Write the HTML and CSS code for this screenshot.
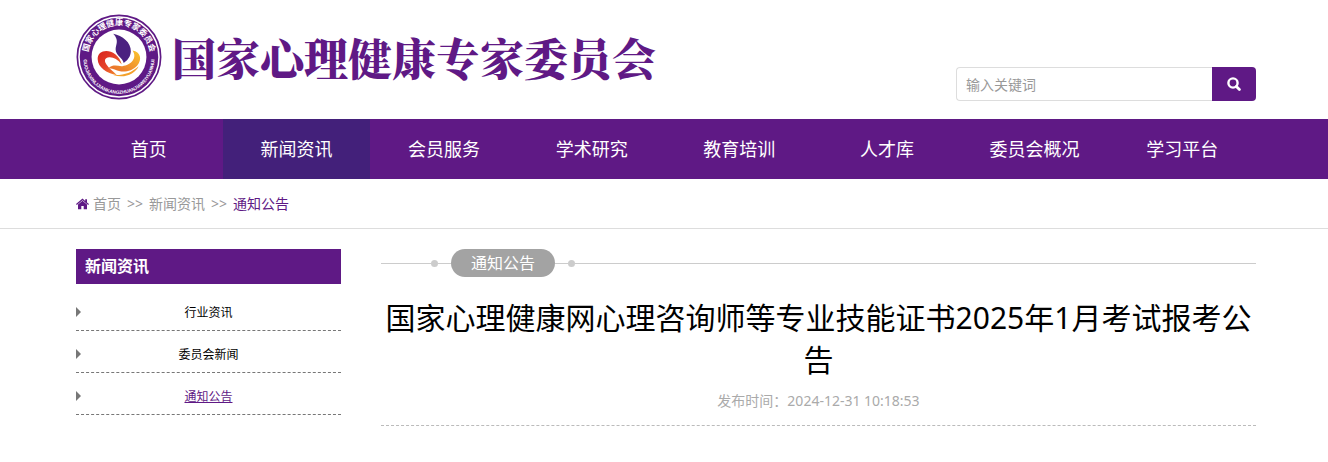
FILE: index.html
```
<!DOCTYPE html>
<html lang="zh-CN">
<head>
  <meta charset="UTF-8">
  <meta name="viewport" content="width=device-width, initial-scale=1.0">
  <title>国家心理健康专家委员会</title>
  <link rel="stylesheet" href="styles.css">
</head>
<body>
  <header class="header container">
    <a class="logo" href="#">
      <svg class="logo-mark" viewBox="20 20 254 254" aria-hidden="true">
        <defs>
          <linearGradient id="heart" x1="0" y1="0" x2="1" y2="1">
            <stop offset="0" stop-color="#d8241f"/>
            <stop offset="0.5" stop-color="#e5432a"/>
            <stop offset="1" stop-color="#f6a42c"/>
          </linearGradient>
          <linearGradient id="wing" x1="1" y1="0" x2="0" y2="1">
            <stop offset="0" stop-color="#fbc62d"/>
            <stop offset="1" stop-color="#e8662a"/>
          </linearGradient>
          <path id="arc-top" d="M57 165 A92 92 0 1 1 237 165"/>
          <path id="arc-bottom" d="M42 151 A105 105 0 0 0 252 151"/>
        </defs>
        <circle cx="147" cy="147" r="123" fill="#fff" stroke="#5f1985" stroke-width="5"/>
        <circle cx="147" cy="147" r="116" fill="#5f1985"/>
        <circle cx="147" cy="147" r="81" fill="#fff"/>
        <text class="ring-cn"><textPath href="#arc-top" startOffset="50%">国家心理健康专家委员会</textPath></text>
        <text class="ring-en"><textPath href="#arc-bottom" startOffset="50%">GUOJIAXINLIJIANKANGZHUANJIAWEIYUANHUI</textPath></text>
        <path fill="#4b2180" d="M130 78 C157 83 183 104 182 130 C181 147 173 155 161 165 C158 148 137 143 137 124 C138 108 148 97 130 78 Z"/>
        <path fill="url(#heart)" d="M141 201 C110 195 85 178 84 154 C83 128 114 122 136 139 C146 147 152 157 155 169 C143 154 130 147 118 148 C105 149 102 158 110 169 C117 180 129 188 141 201 Z"/>
        <path fill="url(#wing)" d="M187 128 C211 132 216 155 201 172 C187 188 166 192 150 189 C137 187 130 179 116 180 C131 167 144 175 157 174 C183 171 202 150 187 128 Z"/>
        <path fill="#f3a12b" d="M205 174 C194 197 164 211 130 200 C160 202 184 193 205 174 Z"/>
      </svg>
      <span class="logo-text">国家心理健康专家委员会</span>
    </a>
    <form class="search" action="#">
      <input class="search-input" type="text" placeholder="输入关键词" aria-label="输入关键词">
      <button class="search-button" type="submit" aria-label="搜索">
        <svg viewBox="0 0 14 14" width="14" height="14" fill="none" stroke="#fff">
          <circle cx="6" cy="6" r="4.6" stroke-width="2.4"/>
          <path d="M9.4 9.4 L12.4 12.4" stroke-width="2.8" stroke-linecap="round"/>
        </svg>
      </button>
    </form>
  </header>

  <nav class="nav">
    <ul class="nav-list container">
      <li><a href="#">首页</a></li>
      <li><a class="active" href="#">新闻资讯</a></li>
      <li><a href="#">会员服务</a></li>
      <li><a href="#">学术研究</a></li>
      <li><a href="#">教育培训</a></li>
      <li><a href="#">人才库</a></li>
      <li><a href="#">委员会概况</a></li>
      <li><a href="#">学习平台</a></li>
    </ul>
  </nav>

  <div class="crumbs">
    <div class="crumbs-inner container">
      <svg class="home" viewBox="0 0 13 12" width="13" height="12" fill="#5f1985" aria-hidden="true">
        <path d="M6.5 0.6 L9.2 2.9 V1.2 H11 V4.4 L13 6.1 L12.2 7 L6.5 2.2 L0.8 7 L0 6.1 Z"/>
        <path d="M6.5 2.8 L11 6.6 V11.2 H7.7 V8 H5.3 V11.2 H2 V6.6 Z"/>
      </svg>
      <a href="#">首页</a>
      <span class="sep">&gt;&gt;</span>
      <a href="#">新闻资讯</a>
      <span class="sep">&gt;&gt;</span>
      <a class="current" href="#">通知公告</a>
    </div>
  </div>

  <div class="content container">
    <aside class="sidebar">
      <h2 class="sidebar-title">新闻资讯</h2>
      <ul class="sidebar-list">
        <li><a href="#">行业资讯</a></li>
        <li><a href="#">委员会新闻</a></li>
        <li><a class="current" href="#">通知公告</a></li>
      </ul>
    </aside>

    <main class="article">
      <div class="section-title">
        <i class="line line-short"></i>
        <i class="dot"></i>
        <i class="line line-gap"></i>
        <span class="pill">通知公告</span>
        <i class="line line-gap"></i>
        <i class="dot"></i>
        <i class="line line-rest"></i>
      </div>
      <h1 class="article-title">国家心理健康网心理咨询师等专业技能证书2025年1月考试报考公告</h1>
      <p class="article-date">发布时间：2024-12-31 10:18:53</p>
    </main>
  </div>
</body>
</html>
```
FILE: styles.css
```
* {
  box-sizing: border-box;
}

body {
  margin: 0;
  font-family: "Noto Sans", "Noto Sans CJK SC", sans-serif;
  font-size: 14px;
  color: #000;
  background-color: #fff;
}

ul,
h1,
h2,
p {
  margin: 0;
  padding: 0;
  list-style: none;
}

a {
  color: inherit;
  text-decoration: none;
}

.container {
  padding-left: 76px;
  padding-right: 72px;
}

/* header */
.header {
  display: flex;
  justify-content: space-between;
  align-items: flex-start;
  padding-top: 14px;
  padding-bottom: 18px;
}

.logo {
  display: flex;
  align-items: center;
  gap: 10px;
}

.logo-mark {
  width: 86px;
  height: 86px;
}

.logo-text {
  font-family: "Noto Serif CJK SC", "Noto Sans CJK SC", serif;
  font-size: 44px;
  font-weight: 900;
  line-height: 60px;
  color: #5f1985;
}

.ring-cn,
.ring-en {
  font-family: "Noto Sans CJK SC", sans-serif;
  font-weight: bold;
  fill: #fff;
  text-anchor: middle;
}

.ring-cn {
  font-size: 24px;
}

.ring-en {
  font-family: "Liberation Sans", sans-serif;
  font-size: 14px;
}

.search {
  display: flex;
  width: 300px;
  height: 34px;
  margin-top: 53px;
}

.search-input {
  flex: 1;
  min-width: 0;
  padding: 0 9px;
  border: 1px solid #ddd;
  border-right: 0;
  border-radius: 4px 0 0 4px;
  font: inherit;
}

.search-input::placeholder {
  color: #999;
}

.search-button {
  display: flex;
  align-items: center;
  justify-content: center;
  width: 44px;
  padding: 0;
  border: 0;
  border-radius: 0 4px 4px 0;
  background-color: #5f1985;
  cursor: pointer;
}

/* nav */
.nav {
  background-color: #5f1985;
}

.nav-list {
  display: flex;
  padding-left: 75px;
  padding-right: 72px;
}

.nav-list li {
  flex: 1;
}

.nav-list a {
  display: block;
  line-height: 60px;
  font-size: 18px;
  text-align: center;
  color: #fff;
}

.nav-list a:hover,
.nav-list .active {
  background-color: #43207a;
}

/* breadcrumb */
.crumbs {
  border-bottom: 1px solid #ddd;
  color: #999;
}

.crumbs-inner {
  display: flex;
  align-items: center;
  gap: 4px;
  line-height: 49px;
}

.crumbs .sep {
  padding: 0 2px;
}

.crumbs .current {
  color: #5f1985;
}

/* content */
.content {
  display: flex;
  gap: 40px;
  padding-top: 20px;
  padding-bottom: 30px;
}

.sidebar {
  flex: 0 0 265px;
}

.sidebar-title {
  padding-left: 9px;
  line-height: 35px;
  font-size: 16px;
  color: #fff;
  background-color: #5f1985;
}

.sidebar-list {
  margin-top: 5px;
}

.sidebar-list li {
  display: flex;
  align-items: center;
  height: 42px;
  padding-top: 4px;
  border-bottom: 1px dashed #777;
  font-size: 12px;
}

.sidebar-list li::before {
  content: "";
  margin-right: -5px;
  border: 5px solid transparent;
  border-left-color: #777;
  border-right: 0;
}

.sidebar-list a {
  flex: 1;
  text-align: center;
}

.sidebar-list .current {
  color: #5f1985;
  text-decoration: underline;
}

.article {
  flex: 1;
  min-width: 0;
}

.section-title {
  display: flex;
  align-items: center;
}

.line {
  height: 1px;
  background-color: #ccc;
}

.line-short {
  width: 50px;
}

.line-gap {
  width: 13px;
}

.line-rest {
  flex: 1;
}

.dot {
  width: 7px;
  height: 7px;
  border-radius: 50%;
  background-color: #ccc;
}

.pill {
  padding: 0 20px;
  border-radius: 14px;
  line-height: 28px;
  font-size: 16px;
  color: #fff;
  background-color: #a3a3a3;
}

.article-title {
  margin-top: 20px;
  font-size: 30px;
  font-weight: normal;
  line-height: 42px;
  text-align: center;
}

.article-date {
  padding: 9px 0 14px;
  border-bottom: 1px dashed #bbb;
  line-height: 21px;
  text-align: center;
  color: #aaa;
}
```
